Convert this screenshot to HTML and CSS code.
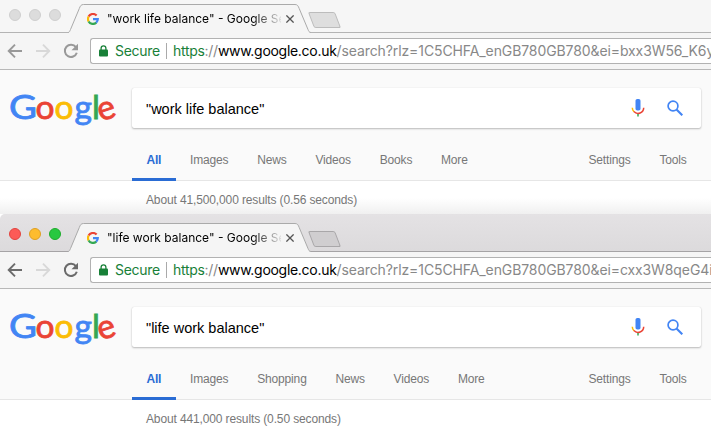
FILE: index.html
```
<!DOCTYPE html>
<html lang="en">

<head>
  <meta charset="UTF-8">
  <meta name="viewport" content="width=device-width, initial-scale=1.0">
  <title>Search comparison</title>
  <link rel="stylesheet" href="styles.css">
</head>

<body>
  <!-- shared icons -->
  <svg class="defs" width="0" height="0">
    <symbol id="tab-shape" viewBox="0 0 244 29">
      <path class="tab-fill" d="M0 28.5 C1.5 28.5 1.8 27 2.5 25.5 L11.3 4.5 C12.3 2 13 .5 15.5 .5 H227 C229.5 .5 230.2 2 231.2 4.5 L240 25.5 C240.7 27 241 28.5 243 28.5 V29 H0 Z" />
      <path class="tab-line" d="M0 28.5 C1.5 28.5 1.8 27 2.5 25.5 L11.3 4.5 C12.3 2 13 .5 15.5 .5 H227 C229.5 .5 230.2 2 231.2 4.5 L240 25.5 C240.7 27 241 28.5 243 28.5" />
    </symbol>
    <symbol id="favicon" viewBox="0 0 12 12">
      <g fill="none" stroke-width="2.2">
        <path stroke="#ea4335" d="M1.6 3.6 A4.9 4.9 0 0 1 9.6 2.6" />
        <path stroke="#fbbc05" d="M1.7 8.5 A4.9 4.9 0 0 1 1.7 3.5" />
        <path stroke="#34a853" d="M9.3 9.6 A4.9 4.9 0 0 1 1.6 8.4" />
        <path stroke="#4285f4" d="M6 6.1 H10.8 A4.9 4.9 0 0 1 9.2 9.7" />
      </g>
    </symbol>
    <symbol id="back" viewBox="0 0 16 16">
      <path d="M15 8 H2 M8 1.7 L1.7 8 L8 14.3" fill="none" stroke="currentColor" stroke-width="1.9" />
    </symbol>
    <symbol id="reload" viewBox="0 0 16 16">
      <path d="M12.9 4.2 A6.1 6.1 0 1 0 13.8 9.7" fill="none" stroke="currentColor" stroke-width="2" />
      <path d="M15 .8 V7.3 H8.5 Z" fill="currentColor" />
    </symbol>
    <symbol id="lock" viewBox="0 0 9 12">
      <rect x="0" y="4.5" width="9" height="7" rx="1" fill="#188038" />
      <path d="M2.1 5 V3.3 a2.4 2.4 0 0 1 4.8 0 V5" fill="none" stroke="#188038" stroke-width="1.3" />
    </symbol>
    <symbol id="close" viewBox="0 0 8 8">
      <path d="M.4 .4 L7.6 7.6 M7.6 .4 L.4 7.6" stroke="currentColor" stroke-width="1.3" />
    </symbol>
    <symbol id="mic" viewBox="0 0 14 18">
      <rect x="4.5" y="0" width="5" height="11.5" rx="1.8" fill="#4285f4" />
      <g fill="none" stroke-width="1.5">
        <path d="M1.3 8.7 A5.7 5.7 0 0 0 3 12.7" stroke="#fbbc05" />
        <path d="M2.9 12.6 A5.7 5.7 0 0 0 12.7 8.7" stroke="#ea4335" />
        <path d="M7 15 V17.5" stroke="#34a853" />
      </g>
    </symbol>
    <symbol id="search" viewBox="0 0 16 16">
      <circle cx="6" cy="6" r="4.9" fill="none" stroke="#4285f4" stroke-width="1.7" />
      <path d="M9.5 9.5 L15.3 15.3" stroke="#4285f4" stroke-width="2.1" />
    </symbol>
  </svg>

  <section class="window window-back">
    <div class="tab-strip">
      <div class="lights"><i></i><i></i><i></i></div>
      <div class="tab">
        <svg class="tab-bg" width="244" height="29"><use href="#tab-shape" /></svg>
        <svg class="favicon" width="12" height="12"><use href="#favicon" /></svg>
        <span class="tab-title">"work life balance" - Google Se</span>
        <svg class="tab-close" width="8" height="8"><use href="#close" /></svg>
      </div>
      <div class="new-tab"></div>
    </div>
    <div class="toolbar">
      <svg class="back" width="16" height="16"><use href="#back" /></svg>
      <svg class="forward" width="16" height="16"><use href="#back" /></svg>
      <svg class="reload" width="16" height="16"><use href="#reload" /></svg>
      <div class="omnibox">
        <svg class="lock" width="9" height="12"><use href="#lock" /></svg>
        <span class="secure">Secure</span>
        <span class="url"><span class="scheme">https</span><span class="slashes">://</span><span class="host">www.google.co.uk</span>/search?rlz=1C5CHFA_enGB780GB780&amp;ei=bxx3W56_K6y</span>
      </div>
    </div>
    <div class="page">
      <div class="search-row">
        <svg class="logo" width="108" height="38" viewBox="0 0 108 38">
          <text x="-1" y="28" textLength="28" lengthAdjust="spacingAndGlyphs" fill="#4285f4" stroke="#4285f4">G</text>
          <text x="25.5" y="28" fill="#ea4335" stroke="#ea4335">o</text>
          <text x="44.5" y="28" fill="#fbbc05" stroke="#fbbc05">o</text>
          <text x="64.5" y="28" fill="#4285f4" stroke="#4285f4">g</text>
          <text x="82" y="28" fill="#34a853" stroke="#34a853">l</text>
          <text x="87.5" y="28" fill="#ea4335" stroke="#ea4335" transform="rotate(-18 97 19)">e</text>
        </svg>
        <div class="search-box">
          <span class="query">"work life balance"</span>
          <svg class="mic" width="14" height="18"><use href="#mic" /></svg>
          <svg width="16" height="16"><use href="#search" /></svg>
        </div>
      </div>
      <nav class="nav">
        <span class="active">All</span>
        <span>Images</span>
        <span>News</span>
        <span>Videos</span>
        <span>Books</span>
        <span>More</span>
        <span class="settings">Settings</span>
        <span>Tools</span>
      </nav>
      <div class="stats">About 41,500,000 results (0.56 seconds)</div>
    </div>
  </section>

  <section class="window window-front">
    <div class="tab-strip">
      <div class="lights"><i class="red"></i><i class="yellow"></i><i class="green"></i></div>
      <div class="tab">
        <svg class="tab-bg" width="244" height="29"><use href="#tab-shape" /></svg>
        <svg class="favicon" width="12" height="12"><use href="#favicon" /></svg>
        <span class="tab-title">"life work balance" - Google Se</span>
        <svg class="tab-close" width="8" height="8"><use href="#close" /></svg>
      </div>
      <div class="new-tab"></div>
    </div>
    <div class="toolbar">
      <svg class="back" width="16" height="16"><use href="#back" /></svg>
      <svg class="forward" width="16" height="16"><use href="#back" /></svg>
      <svg class="reload" width="16" height="16"><use href="#reload" /></svg>
      <div class="omnibox">
        <svg class="lock" width="9" height="12"><use href="#lock" /></svg>
        <span class="secure">Secure</span>
        <span class="url"><span class="scheme">https</span><span class="slashes">://</span><span class="host">www.google.co.uk</span>/search?rlz=1C5CHFA_enGB780GB780&amp;ei=cxx3W8qeG4i</span>
      </div>
    </div>
    <div class="page">
      <div class="search-row">
        <svg class="logo" width="108" height="38" viewBox="0 0 108 38">
          <text x="-1" y="28" textLength="28" lengthAdjust="spacingAndGlyphs" fill="#4285f4" stroke="#4285f4">G</text>
          <text x="25.5" y="28" fill="#ea4335" stroke="#ea4335">o</text>
          <text x="44.5" y="28" fill="#fbbc05" stroke="#fbbc05">o</text>
          <text x="64.5" y="28" fill="#4285f4" stroke="#4285f4">g</text>
          <text x="82" y="28" fill="#34a853" stroke="#34a853">l</text>
          <text x="87.5" y="28" fill="#ea4335" stroke="#ea4335" transform="rotate(-18 97 19)">e</text>
        </svg>
        <div class="search-box">
          <span class="query">"life work balance"</span>
          <svg class="mic" width="14" height="18"><use href="#mic" /></svg>
          <svg width="16" height="16"><use href="#search" /></svg>
        </div>
      </div>
      <nav class="nav">
        <span class="active">All</span>
        <span>Images</span>
        <span>Shopping</span>
        <span>News</span>
        <span>Videos</span>
        <span>More</span>
        <span class="settings">Settings</span>
        <span>Tools</span>
      </nav>
      <div class="stats">About 441,000 results (0.50 seconds)</div>
    </div>
  </section>
</body>

</html>
```
FILE: styles.css
```
* {
  box-sizing: border-box;
}

body {
  margin: 0;
  height: 434px;
  overflow: hidden;
  background: #fff;
  font-family: "Liberation Sans", Arial, sans-serif;
}

.defs {
  position: absolute;
}

svg {
  display: block;
  flex: none;
}

.window {
  overflow: hidden;
}

.window-back {
  height: 214px;
}

.window-front {
  height: 220px;
}

/* tab strip */
.tab-strip {
  display: flex;
  align-items: flex-end;
  height: 33px;
  background: #f6f6f6;
  border-bottom: 1px solid #b4b4b4;
}

.window-front .tab-strip {
  height: 38px;
  background: linear-gradient(#e4e2e4, #dcdadc);
  border-bottom-color: #a5a3a5;
  border-top-left-radius: 5px;
}

.lights {
  display: flex;
  gap: 8px;
  width: 68px;
  padding: 0 0 11px 9px;
}

.lights i {
  width: 12px;
  height: 12px;
  border-radius: 50%;
  background: #dcdcdc;
  border: 1px solid #cfcfcf;
}

.lights .red {
  background: #fc5b57;
  border-color: #e2443f;
}

.lights .yellow {
  background: #fdbc2e;
  border-color: #dfa023;
}

.lights .green {
  background: #28c840;
  border-color: #1dad2b;
}

.tab {
  position: relative;
  display: flex;
  align-items: center;
  width: 244px;
  height: 29px;
  margin-bottom: -1px;
  padding-left: 19px;
}

.tab-bg {
  position: absolute;
  left: 0;
  top: 0;
}

.tab-fill {
  fill: #f5f5f5;
}

.tab-line {
  fill: none;
  stroke: #aaa;
}

.favicon {
  position: relative;
}

.tab-title {
  position: relative;
  width: 174px;
  margin-left: 8px;
  white-space: nowrap;
  font-family: Inter, Roboto, sans-serif;
  font-size: 12px;
  line-height: 18px;
  color: #000;
  -webkit-mask-image: linear-gradient(to right, #000 145px, transparent 177px);
  mask-image: linear-gradient(to right, #000 145px, transparent 177px);
}

.tab-close {
  position: relative;
  margin-left: 5px;
  color: #555;
}

.new-tab {
  width: 27px;
  height: 16px;
  margin: 0 0 4px -1px;
  background: #dedede;
  border: 1px solid #bcbcbc;
  border-radius: 2px;
  transform: skewX(21deg);
}

.window-front .new-tab {
  background: #d0ced0;
  border-color: #a9a7a9;
}

/* toolbar */
.toolbar {
  display: flex;
  align-items: center;
  height: 37px;
  padding-left: 7px;
  background: #f5f5f5;
  border-bottom: 1px solid #b8b8b8;
}

.back {
  color: #999;
}

.forward {
  margin-left: 12px;
  color: #d8d8d8;
  transform: scaleX(-1);
}

.reload {
  margin-left: 12px;
  color: #999;
}

.window-front .back,
.window-front .reload {
  color: #6b6b6b;
}

.omnibox {
  display: flex;
  align-items: center;
  flex: 1;
  min-width: 0;
  height: 26px;
  margin-left: 11px;
  padding-left: 8px;
  background: #fff;
  border: 1px solid #b2b2b2;
  border-right: 0;
  border-radius: 3px 0 0 3px;
  font-family: Inter, Roboto, sans-serif;
  font-size: 14px;
  line-height: 16px;
  white-space: nowrap;
}

.secure {
  flex: none;
  width: 52px;
  margin-left: 7px;
  letter-spacing: -0.3px;
  color: #188038;
  border-right: 1px solid #aaa;
}

.url {
  margin-left: 6px;
  letter-spacing: -0.1px;
  color: #888;
}

.scheme,
.slashes,
.host {
  letter-spacing: -0.29px;
}

.scheme {
  color: #188038;
}

.host {
  color: #000;
}

/* results page */
.page {
  height: 144px;
  background: linear-gradient(#fafafa 110px, #fff 110px);
}

.search-row {
  display: flex;
  padding-top: 18px;
}

.logo {
  margin: 3px 0 0 10px;
  overflow: visible;
  font-family: Lato, sans-serif;
  font-size: 33.5px;
  stroke-width: 0.8px;
}

.search-box {
  display: flex;
  align-items: center;
  width: 569px;
  height: 40px;
  margin-left: 14px;
  padding: 0 18px 0 14px;
  background: #fff;
  border-radius: 2px;
  box-shadow: 0 1px 2px rgba(0, 0, 0, 0.25), 0 0 1px rgba(0, 0, 0, 0.15);
}

.query {
  flex: 1;
  padding-top: 2px;
  font-size: 14.5px;
  color: #000;
}

.mic {
  margin-right: 22px;
}

.nav {
  display: flex;
  height: 52px;
  padding: 0 10px 0 132px;
  border-bottom: 1px solid #e6e6e6;
  font-size: 12px;
  line-height: 14px;
  letter-spacing: -0.16px;
  color: #777;
}

.nav span {
  height: 52px;
  padding: 24px 14.4px 0;
}

.nav .active {
  font-weight: bold;
  color: #2a6cd4;
  border-bottom: 3px solid #2a6cd4;
}

.nav .settings {
  margin-left: auto;
}

.stats {
  padding: 12px 0 0 146px;
  font-size: 12px;
  line-height: 14px;
  letter-spacing: -0.13px;
  color: #777;
}

.window-back .page {
  background: linear-gradient(#fafafa 110px, #fff 110px, #fff 128px, #f0f0f0 144px);
}
```
